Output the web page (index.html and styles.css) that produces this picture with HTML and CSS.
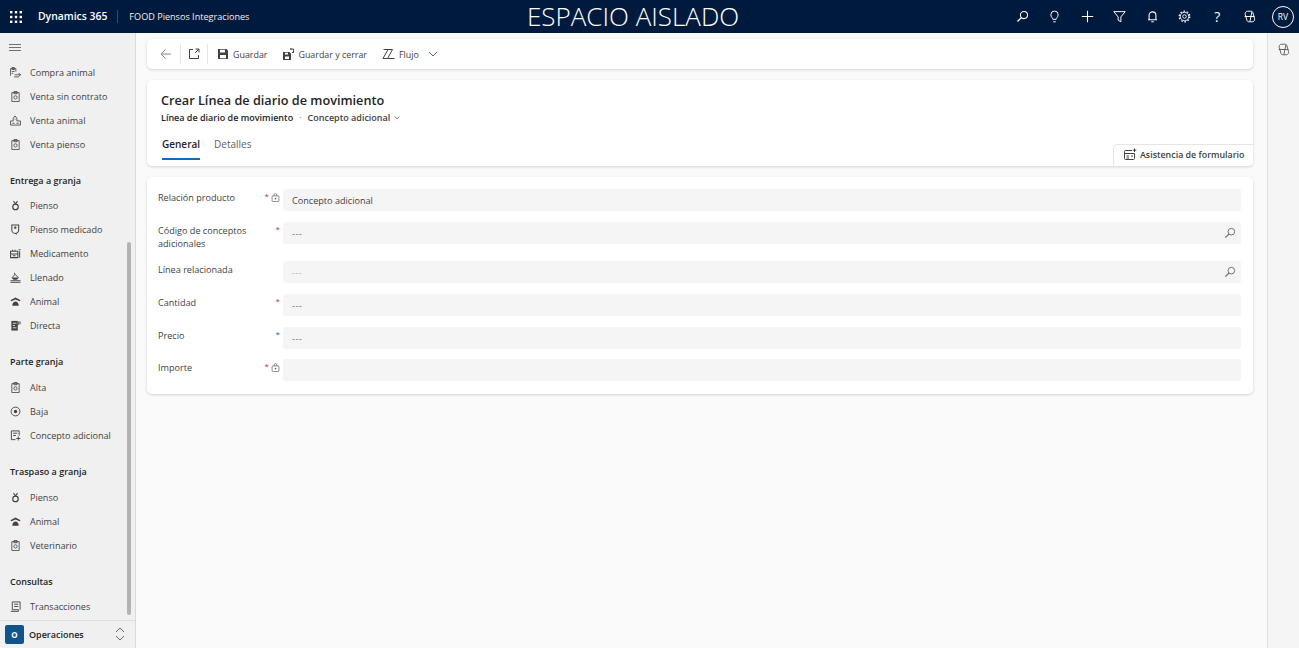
FILE: index.html
```html
<!DOCTYPE html>
<html lang="es">
<head>
    <title>Crear Línea de diario de movimiento</title>
    <link rel="stylesheet" href="styles.css">
</head>
<body>
    <svg class="defs" width="0" height="0">
        <defs>
            <symbol id="i-clipboard" viewBox="0 0 12 12"><path d="M2 1.800h8v9.700H2zM4.300 .6h3.400v2.400H4.300z" fill="none" stroke="currentColor" stroke-width=".9"/><circle cx="6" cy="7" r="1.800" fill="none" stroke="currentColor" stroke-width=".9"/></symbol>
            <symbol id="i-ring" viewBox="0 0 12 12"><circle cx="6" cy="7.500" r="3" fill="none" stroke="currentColor" stroke-width="1.300"/><path d="M3.800 1.200l2.200 3 2.200-3" fill="none" stroke="currentColor" stroke-width="1.100"/></symbol>
            <symbol id="i-paw" viewBox="0 0 12 12"><path d="M.5 4.500L6 1.500l5.500 3-1 1.300L6 3.800 1.500 5.800z" fill="currentColor"/><path d="M2.500 10.500c0-2.500 1.500-4.500 3.500-4.500s3.500 2 3.500 4.500z" fill="currentColor"/></symbol>
            <symbol id="i-lock" viewBox="0 0 10 10"><rect x="1.200" y="3.200" width="7.600" height="6.300" rx="1" fill="none" stroke="currentColor" stroke-width=".8"/><path d="M3.500 3.200v-1a1.500 1.500 0 013 0v1" fill="none" stroke="currentColor" stroke-width=".8"/><circle cx="5" cy="6.300" r=".9" fill="currentColor"/></symbol>
            <symbol id="i-search" viewBox="0 0 16 16"><circle cx="9.800" cy="6.200" r="4.400" fill="none" stroke="currentColor" stroke-width="1.300"/><path d="M6.700 9.300L1.800 14.200" fill="none" stroke="currentColor" stroke-width="1.600"/></symbol>
            <symbol id="i-copilot" viewBox="0 0 16 16"><path d="M5.500 1.500h4c1.500 0 2.200.6 2.700 2l2 7c.5 2-.7 4-2.700 4h-4c-1.500 0-2.200-.6-2.700-2l-2-7c-.5-2 .7-4 2.700-4z" fill="none" stroke="currentColor" stroke-width="1.200"/><path d="M11 2L8.500 14M2 8h12" fill="none" stroke="currentColor" stroke-width="1.200"/></symbol>
        </defs>
    </svg>

    <header class="topbar">
        <div class="brand">
            <svg class="waffle" width="12" height="12" viewBox="0 0 12 12" fill="#fff">
                <rect x="0" y="0" width="2.400" height="2.400"/><rect x="4.800" y="0" width="2.400" height="2.400"/><rect x="9.600" y="0" width="2.400" height="2.400"/>
                <rect x="0" y="4.800" width="2.400" height="2.400"/><rect x="4.800" y="4.800" width="2.400" height="2.400"/><rect x="9.600" y="4.800" width="2.400" height="2.400"/>
                <rect x="0" y="9.600" width="2.400" height="2.400"/><rect x="4.800" y="9.600" width="2.400" height="2.400"/><rect x="9.600" y="9.600" width="2.400" height="2.400"/>
            </svg>
            <span class="product">Dynamics 365</span>
            <span class="env">FOOD Piensos Integraciones</span>
        </div>
        <div class="sandbox">ESPACIO AISLADO</div>
        <div class="top-actions">
            <span class="top-icon"><svg><use href="#i-search"/></svg></span>
            <span class="top-icon"><svg viewBox="0 0 16 16" fill="none" stroke="currentColor" stroke-width="1.200"><path d="M6 11.500C6 9.500 3.500 9 3.500 5.800a4.500 4.500 0 019 0c0 3.200-2.500 3.700-2.500 5.700zM6.500 14.500h3"/></svg></span>
            <span class="top-icon"><svg viewBox="0 0 16 16" fill="none" stroke="currentColor" stroke-width="1.300"><path d="M8 1v14M1 8h14"/></svg></span>
            <span class="top-icon"><svg viewBox="0 0 16 16" fill="none" stroke="currentColor" stroke-width="1.200"><path d="M1 2h14L9.700 8.500v6l-3.400-2V8.500z"/></svg></span>
            <span class="top-icon"><svg viewBox="0 0 16 16" fill="none" stroke="currentColor" stroke-width="1.300"><path d="M3.800 12V6.500a4.200 4.200 0 018.400 0V12zM2.500 12h11M6.500 14.500h3"/></svg></span>
            <span class="top-icon"><svg viewBox="0 0 16 16" fill="none" stroke="currentColor"><circle cx="8" cy="8" r="2.200" stroke-width="1.100"/><circle cx="8" cy="8" r="5.200" stroke-width="1.100"/><circle cx="8" cy="8" r="6.500" stroke-width="1.500" stroke-dasharray="2 2.080"/></svg></span>
            <span class="top-icon help">?</span>
            <span class="top-icon"><svg><use href="#i-copilot"/></svg></span>
            <span class="avatar">RV</span>
        </div>
    </header>

    <div class="shell">
        <aside class="sidebar">
            <div class="hamburger"><svg width="12" height="7" viewBox="0 0 12 7" fill="none" stroke="#707070"><path d="M0 .5h12M0 3.500h12M0 6.500h12"/></svg></div>
            <nav class="nav">
                <a class="nav-item"><svg class="nav-icon" viewBox="0 0 12 12"><path d="M.6 9.500V1.800h5.800V5M2.200 .6h2.600v2.200H2.200zM2 5h3M2 7h1.500M5 8.500h6.500M9.500 6.500l2 2-2 2M4.500 10.800h5" fill="none" stroke="currentColor" stroke-width=".9"/></svg>Compra animal</a>
                <a class="nav-item"><svg class="nav-icon"><use href="#i-clipboard"/></svg>Venta sin contrato</a>
                <a class="nav-item"><svg class="nav-icon" viewBox="0 0 12 12"><path d="M.6 11h10.800V6.500H7.500V3.500L5.500 1 3.500 3.500v3H.6zM2.500 9h2.500M7 9h2.500M5 4.500h1" fill="none" stroke="currentColor" stroke-width=".9"/></svg>Venta animal</a>
                <a class="nav-item"><svg class="nav-icon"><use href="#i-clipboard"/></svg>Venta pienso</a>

                <div class="nav-group">Entrega a granja</div>
                <a class="nav-item"><svg class="nav-icon"><use href="#i-ring"/></svg>Pienso</a>
                <a class="nav-item"><svg class="nav-icon" viewBox="0 0 12 12"><path d="M2 1h7.500v5.500a3.700 3.700 0 01-7.500 0zM7 10.500v1M4.200 4h3M5.700 2.500v3" fill="none" stroke="currentColor" stroke-width="1.100"/></svg>Pienso medicado</a>
                <a class="nav-item"><svg class="nav-icon" viewBox="0 0 12 12"><path d="M.6 3.500h8v7H.6zM.6 6.500h8M2.800 1.800v1.700M5.500 1.800v1.700M3 8.500h3M10.500 3.500v7M9.500 1.800h2" fill="none" stroke="currentColor" stroke-width="1.100"/></svg>Medicamento</a>
                <a class="nav-item"><svg class="nav-icon" viewBox="0 0 12 12"><path d="M5 .8v2M2.500 6l3-3.500L9 6c0 1.500-1.500 2-3.500 2s-3-.5-3-2z" fill="none" stroke="currentColor" stroke-width="1"/><path d="M2.500 6H9c0 1.500-1.500 2-3.500 2s-3-.5-3-2z" fill="currentColor"/><path d="M.5 9.500h11M.5 11.300h11" stroke="currentColor"/></svg>Llenado</a>
                <a class="nav-item"><svg class="nav-icon"><use href="#i-paw"/></svg>Animal</a>
                <a class="nav-item"><svg class="nav-icon" viewBox="0 0 12 12"><path d="M1.500 1h7v10.500h-7z" fill="currentColor"/><path d="M9.500 1.500v4M11 1.500v3" stroke="currentColor"/><path d="M3 3.500h4M3 6h2.500M3 8.500h4" stroke="#f0f0f0" stroke-width=".9"/></svg>Directa</a>

                <div class="nav-group">Parte granja</div>
                <a class="nav-item"><svg class="nav-icon"><use href="#i-clipboard"/></svg>Alta</a>
                <a class="nav-item"><svg class="nav-icon" viewBox="0 0 12 12"><circle cx="6" cy="6" r="4.800" fill="none" stroke="currentColor"/><circle cx="6" cy="6" r="1.800" fill="currentColor"/></svg>Baja</a>
                <a class="nav-item"><svg class="nav-icon" viewBox="0 0 12 12"><path d="M6 10.500H1.500v-9.500h8.500V6M3.500 3.500h4.500M3.500 6h3M9 7v4.500M6.800 9.300h4.500" fill="none" stroke="currentColor"/></svg>Concepto adicional</a>

                <div class="nav-group">Traspaso a granja</div>
                <a class="nav-item"><svg class="nav-icon"><use href="#i-ring"/></svg>Pienso</a>
                <a class="nav-item"><svg class="nav-icon"><use href="#i-paw"/></svg>Animal</a>
                <a class="nav-item"><svg class="nav-icon"><use href="#i-clipboard"/></svg>Veterinario</a>

                <div class="nav-group">Consultas</div>
                <a class="nav-item"><svg class="nav-icon" viewBox="0 0 12 12"><path d="M2.500 1h8.500v8.500M2.500 1v8.500M.8 11.300h8.400V9.500H2.500M4.500 3.500h4.500M4.500 6h4.500" fill="none" stroke="currentColor"/></svg>Transacciones</a>
            </nav>
            <div class="scrollbar"></div>
            <div class="area-switch">
                <span class="area-badge">O</span>
                <span class="area-name">Operaciones</span>
                <svg width="10" height="16" viewBox="0 0 10 16" fill="none" stroke="#707070"><path d="M1 6l4-4 4 4M1 10l4 4 4-4"/></svg>
            </div>
        </aside>

        <main class="content">
            <div class="card toolbar">
                <button class="tool back"><svg width="12" height="12" viewBox="0 0 12 12" fill="none" stroke="#8a8886"><path d="M11 6H1M5.500 1.500L1 6l4.500 4.500"/></svg></button>
                <span class="tool-sep"></span>
                <button class="tool popout"><svg width="12" height="12" viewBox="0 0 12 12" fill="none" stroke="#424242"><path d="M5 1.500H1.500v9h9V7M7.500 1h3.500v3.500M11 1L7 5"/></svg></button>
                <span class="tool-sep"></span>
                <button class="tool"><svg width="12" height="12" viewBox="0 0 12 12"><path d="M1 1h8.500L11 2.500V11H1z" fill="#424242"/><path d="M3 1.800h5v2.700H3zM3 7h6v3.300H3z" fill="#fff"/></svg>Guardar</button>
                <button class="tool"><svg width="12" height="13" viewBox="0 0 12 13"><path d="M1 4h6.500L9 5.500V12H1z" fill="#424242"/><path d="M3 8.500h4V11H3zM3 4.700h3v1.800H3z" fill="#fff"/><path d="M8 1h3.500v3.500M9.500 1H8M11.500 3v1.500H10" fill="none" stroke="#424242"/></svg>Guardar y cerrar</button>
                <button class="tool"><svg width="13" height="12" viewBox="0 0 13 12" fill="none" stroke="#424242"><path d="M1.500 1.500h9L5.500 10.500h7M6 1.500L1 10.500h4.500"/></svg>Flujo<svg class="caret" width="10" height="6" viewBox="0 0 10 6" fill="none" stroke="#616161"><path d="M1 1l4 4 4-4"/></svg></button>
            </div>

            <div class="card form-head">
                <h1>Crear Línea de diario de movimiento</h1>
                <div class="subtitle">
                    <span class="entity">Línea de diario de movimiento</span>
                    <span class="dot">·</span>
                    <span class="form-name">Concepto adicional</span>
                    <svg width="6" height="4" viewBox="0 0 6 4" fill="none" stroke="#616161" stroke-width=".8"><path d="M.5.5L3 3 5.500.5"/></svg>
                </div>
                <div class="tabs">
                    <span class="tab active">General</span>
                    <span class="tab">Detalles</span>
                </div>
                <div class="assist">
                    <svg width="13" height="13" viewBox="0 0 13 13" fill="none" stroke="#424242"><path d="M8 2.500H1.500a1 1 0 00-1 1v7a1 1 0 001 1h8a1 1 0 001-1V5.500M.5 5.500h10M2.500 8h2.500M2.500 10h2.500M7 8h2M10.500.500v3.500M8.800 2.200h3.500"/></svg>
                    Asistencia de formulario
                </div>
            </div>

            <div class="card form-body">
                <div class="field">
                    <label class="field-label">Relación producto</label>
                    <span class="field-marks"><span class="req">*</span><svg class="lock" width="9" height="9"><use href="#i-lock"/></svg></span>
                    <div class="input">Concepto adicional</div>
                </div>
                <div class="field">
                    <label class="field-label">Código de conceptos adicionales</label>
                    <span class="field-marks"><span class="req">*</span></span>
                    <div class="input empty">---<svg class="lookup" width="12" height="12"><use href="#i-search"/></svg></div>
                </div>
                <div class="field">
                    <label class="field-label">Línea relacionada</label>
                    <span class="field-marks"></span>
                    <div class="input empty faint">---<svg class="lookup" width="12" height="12"><use href="#i-search"/></svg></div>
                </div>
                <div class="field">
                    <label class="field-label">Cantidad</label>
                    <span class="field-marks"><span class="req">*</span></span>
                    <div class="input empty">---</div>
                </div>
                <div class="field">
                    <label class="field-label">Precio</label>
                    <span class="field-marks"><span class="req rec">*</span></span>
                    <div class="input empty">---</div>
                </div>
                <div class="field">
                    <label class="field-label">Importe</label>
                    <span class="field-marks"><span class="req">*</span><svg class="lock" width="9" height="9"><use href="#i-lock"/></svg></span>
                    <div class="input"></div>
                </div>
            </div>
        </main>

        <aside class="side-rail">
            <svg width="13" height="13"><use href="#i-copilot"/></svg>
        </aside>
    </div>
</body>
</html>
```

FILE: styles.css
```css
* {
    box-sizing: border-box;
    font-family: "Open Sans", "Noto Sans", "Liberation Sans", sans-serif;
}

html, body {
    height: 100%;
}

body {
    margin: 0;
    overflow: hidden;
    display: flex;
    flex-direction: column;
    background-color: #fafafa;
    color: #242424;
}

.defs {
    position: absolute;
}

.topbar {
    height: 33px;
    flex: none;
    display: grid;
    grid-template-columns: 527px auto 1fr;
    align-items: center;
    background-color: #001a3d;
    color: #fff;
}

.brand {
    display: flex;
    align-items: center;
    padding-left: 10px;
}

.waffle {
    margin-right: 16px;
}

.product {
    font-size: 10.400px;
    font-weight: 600;
    padding-right: 10px;
    border-right: 1px solid #33486a;
    line-height: 13px;
}

.env {
    font-size: 9.100px;
    margin-left: 11px;
    color: #f0f0f0;
}

.sandbox {
    font-size: 26px;
    font-weight: 300;
    line-height: 33px;
    white-space: nowrap;
}

.top-actions {
    display: flex;
    align-items: center;
    justify-content: flex-end;
    padding-right: 5px;
}

.top-icon {
    width: 32.500px;
    display: flex;
    justify-content: center;
    align-items: center;
}

.top-icon svg {
    width: 13px;
    height: 13px;
}

.help {
    font-size: 14px;
    line-height: 16px;
}

.avatar {
    width: 22px;
    height: 22px;
    margin-left: 6px;
    border: 1px solid #fff;
    border-radius: 50%;
    font-size: 8.500px;
    display: flex;
    align-items: center;
    justify-content: center;
}

.shell {
    flex: 1;
    min-height: 0;
    display: flex;
}

.sidebar {
    position: relative;
    width: 136px;
    flex: none;
    display: flex;
    flex-direction: column;
    background-color: #f0f0f0;
    border-right: 1px solid #d9d9d9;
}

.hamburger {
    height: 27px;
    flex: none;
    padding: 10.500px 0 0 9px;
}

.hamburger svg {
    display: block;
}

.nav {
    flex: 1;
    min-height: 0;
    overflow: hidden;
}

.nav-item {
    height: 24px;
    display: flex;
    align-items: center;
    padding-left: 10px;
    font-size: 9.100px;
    color: #424242;
    white-space: nowrap;
}

.nav-icon {
    width: 11px;
    height: 11px;
    margin-right: 9px;
    color: #424242;
    flex: none;
}

.nav-group {
    height: 24px;
    margin-top: 12.500px;
    padding-left: 10px;
    font-size: 9px;
    font-weight: 600;
    line-height: 24px;
    color: #242424;
}

.nav-item + .nav-group + .nav-item {
    margin-top: 1.200px;
}

.scrollbar {
    position: absolute;
    left: 127px;
    top: 209px;
    width: 4px;
    height: 373px;
    border-radius: 2px;
    background-color: #b3b3b3;
}

.area-switch {
    height: 28px;
    flex: none;
    display: flex;
    align-items: center;
    padding: 0 10px 1px 5px;
    border-top: 1px solid #e0e0e0;
}

.area-badge {
    width: 19px;
    height: 19px;
    border-radius: 2px;
    background-color: #0f548c;
    color: #fff;
    font-size: 8px;
    font-weight: 700;
    display: flex;
    align-items: center;
    justify-content: center;
}

.area-name {
    flex: 1;
    margin-left: 5px;
    font-size: 9px;
    font-weight: 600;
}

.content {
    flex: 1;
    min-width: 0;
    padding: 6px 14px 0 11px;
}

.card {
    background-color: #fff;
    border-radius: 5px;
    box-shadow: 0 1px 3px rgba(0, 0, 0, 0.16);
}

.toolbar {
    height: 30px;
    display: flex;
    align-items: center;
    padding-left: 8px;
    margin-bottom: 11px;
}

.tool {
    display: flex;
    align-items: center;
    gap: 4px;
    height: 24px;
    padding: 0;
    margin-right: 15px;
    border: none;
    background: none;
    font-size: 8.900px;
    color: #424242;
}

.tool.back,
.tool.popout {
    margin: 0 8px 0 5px;
}

.tool.popout {
    margin: 0 7px;
}

.tool-sep {
    width: 1px;
    height: 20px;
    background-color: #e6e6e6;
}

.tool-sep + .tool + .tool-sep {
    margin-right: 9px;
}

.caret {
    margin-left: 5px;
}

.form-head {
    position: relative;
    height: 86px;
    padding: 12px 0 0 14px;
    margin-bottom: 11px;
}

h1 {
    margin: 0;
    font-size: 12.700px;
    font-weight: 600;
    line-height: 17px;
    color: #242424;
}

.subtitle {
    display: flex;
    align-items: center;
    height: 15px;
    margin-top: 1px;
    font-size: 9px;
    color: #424242;
}

.entity {
    font-weight: 600;
    color: #242424;
}

.dot {
    margin: 0 6px;
    color: #808080;
}

.form-name {
    font-weight: 600;
    margin-right: 4px;
}

.tabs {
    display: flex;
    gap: 14px;
    margin-top: 11px;
    padding-left: 1px;
}

.tab {
    height: 24px;
    line-height: 17px;
    font-size: 10px;
    color: #616161;
}

.tab.active {
    font-weight: 600;
    color: #242424;
    border-bottom: 2px solid #0f6cbd;
}

.assist {
    position: absolute;
    right: 0;
    bottom: 0;
    width: 140px;
    height: 22px;
    display: flex;
    align-items: center;
    padding: 0 0 2px 10px;
    gap: 3px;
    background-color: #fff;
    border: 1px solid #e6e6e6;
    border-width: 1px 0 0 1px;
    border-radius: 5px 0 5px 0;
    font-size: 8.900px;
    font-weight: 600;
    color: #424242;
}

.form-body {
    padding: 12px 12px 12.500px 11px;
}

.field {
    display: flex;
    align-items: flex-start;
    margin-bottom: 10.700px;
}

.field:last-child {
    margin-bottom: 0;
}

.field-label {
    width: 106px;
    padding-top: 2px;
    font-size: 9.100px;
    line-height: 13.500px;
    color: #424242;
}

.field-marks {
    width: 19px;
    display: flex;
    justify-content: flex-end;
    padding: 2px 3px 0 0;
    align-items: flex-start;
    gap: 2px;
}

.req {
    font-size: 8px;
    line-height: 10px;
    color: #c4314b;
}

.req.rec {
    color: #0f6cbd;
}

.lock {
    margin-top: 2px;
    color: #616161;
}

.input {
    position: relative;
    flex: 1;
    height: 22px;
    padding: 0 9px;
    border-radius: 3px;
    background-color: #f5f5f5;
    font-size: 9.100px;
    line-height: 24px;
    color: #424242;
}

.input.empty {
    color: #707070;
    letter-spacing: .5px;
}

.input.faint {
    color: #b0b0b0;
}

.lookup {
    position: absolute;
    right: 5px;
    top: 5px;
    color: #707070;
}

.side-rail {
    width: 32px;
    flex: none;
    display: flex;
    justify-content: center;
    padding-top: 10px;
    background-color: #f5f5f5;
    border-left: 1px solid #e0e0e0;
    color: #616161;
}
```
